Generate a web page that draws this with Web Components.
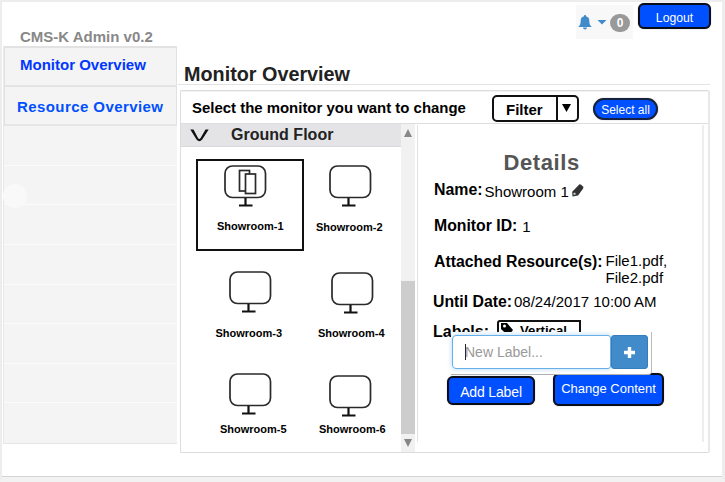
<!DOCTYPE html>
<html lang="en">
<head>
<meta charset="utf-8">
<title>CMS-K Admin</title>
<style>
body{margin:0;font-family:"Liberation Sans",Arial,sans-serif;color:#000;overflow:hidden}
</style>
</head>
<body>
<cms-app></cms-app>
<script>
function define(name, html) {
  const t = document.createElement('template');
  t.innerHTML = '<style>*{box-sizing:border-box}:host{box-sizing:border-box;display:block}</style>' + html;
  customElements.define(name, class extends HTMLElement {
    constructor() {
      super();
      this.attachShadow({mode: 'open'}).appendChild(t.content.cloneNode(true));
    }
  });
}

define('cms-text', `<style>
:host{white-space:nowrap;font-size:var(--s,15px);line-height:20px;height:20px;letter-spacing:var(--ls,0)}
:host([bold]){font-weight:bold}
</style><slot></slot>`);

define('cms-button', `<style>
:host{display:flex;justify-content:center;background:#0050ff;color:#fff;border:2px solid #0a0d18;border-radius:6px;white-space:nowrap;line-height:20px;box-shadow:0 0 1px #777}
</style><slot></slot>`);

define('cms-bell', `<style>
:host{width:57px;height:34px;background:#f8f8f8;display:flex;align-items:flex-start;padding:9px 0 0 2px}
svg{display:block}
span{width:20px;height:18px;border-radius:9px;background:#999;color:#fff;font:bold 12px/18px "Liberation Sans",sans-serif;text-align:center;margin-left:1px}
</style>
<svg width="31" height="18" viewBox="0 0 31 18"><path d="M7 1c.8 0 1 .5 1 1.200 2.300.6 3.300 2.200 3.300 4.300 0 3.500.7 4.700 2.500 6.500H.2C2 11.200 2.700 10 2.700 6.500 2.700 4.400 3.700 2.800 6 2.200 6 1.500 6.200 1 7 1zM5 13.500h4a2 2 0 0 1-4 0z" fill="#428bca"/><path d="M19.500 6h9l-4.500 4.500z" fill="#428bca"/></svg><span>0</span>`);

define('cms-header', `<style>
:host{height:44px;display:flex;align-items:flex-start}
.t{margin:25px auto 0 18px;color:#888}
cms-bell{margin-top:3px}
cms-button{width:73px;height:26px;margin:1px 11px 0 5px;padding-top:3px;font-size:12.2px}
</style>
<cms-text class="t" bold>CMS-K Admin v0.2</cms-text><cms-bell></cms-bell><cms-button>Logout</cms-button>`);

define('cms-sidebar', `<style>
:host{width:174px;height:398px;background:#f4f4f4;border-left:1px solid #e9e9e9;border-bottom:1px solid #e5e5e5;display:grid;grid-template-rows:40px 40px repeat(8,1fr)}
.i{border:1px solid #e2e2e2;color:#0037ff;border-bottom-color:#e6e6e6}
.i.r{color:#0050ff}
.b{border-bottom:1px solid #fbfbfb;position:relative}
.b:last-child{border:0}
.dot{position:absolute;left:-1px;top:18px;width:24px;height:24px;border-radius:50%;background:#f9f9f9}
</style>
<div class="i" style="padding:7px 0 0 15px;border-top-width:2px"><cms-text bold>Monitor Overview</cms-text></div>
<div class="i r" style="padding:10px 0 0 12px;border-bottom-width:2px"><cms-text bold style="--ls:.42px">Resource Overview</cms-text></div>
<div class="b"></div><div class="b"><i class="dot"></i></div><div class="b"></div><div class="b"></div><div class="b"></div><div class="b"></div><div class="b"></div><div class="b"></div>`);

define('cms-filter', `<style>
:host{width:87px;height:27px;border:2px solid #111;border-radius:5px;display:flex;font-weight:bold;font-size:15px;line-height:25px}
.l{width:64px;padding-left:12px;border-right:2px solid #111}
svg{display:block;margin:6px 0 0 4px}
</style><div class="l"><slot></slot></div><svg width="10" height="10"><path d="M0 1h9L4.500 9z"/></svg>`);

define('cms-toolbar', `<style>
:host{height:33px;display:flex;align-items:flex-start;border-top:1px solid #f3f3f3;border-bottom:1px solid #dedee2}
cms-text{--s:14.95px;width:275px;margin:6px 0 0 11px}
cms-filter{margin:3px 14px 0 25px}
cms-button{width:65px;height:22px;border-radius:12px;margin-top:6px;font-size:12px;padding-top:0;border-color:#16213f}
</style><cms-text bold>Select the monitor you want to change</cms-text><cms-filter>Filter</cms-filter><cms-button>Select all</cms-button>`);

define('cms-monitor', `<style>
:host{padding-top:var(--iy);border:2px solid transparent}
:host([selected]){border-color:#111}
svg{display:block;margin-left:var(--ix);overflow:visible}
.p{display:none}:host([selected]) .p{display:block}
cms-text{--s:11px;margin:var(--gap) 0 0 var(--lx)}
:host([selected]) .stand{transform:translateX(2px)}
</style>
<svg width="43" height="43" fill="none" stroke="#2a2a2a"><rect x="1" y="1" width="40.500" height="31.500" rx="7.500" stroke-width="1.700"/><path class="stand" d="M19.500 33v7M13 40.500h13.500" stroke="#111" stroke-width="2.200"/><g class="p" stroke-width="1.700"><rect x="15.500" y="5.500" width="10" height="20.500" fill="#fff"/><rect x="21.500" y="9" width="10" height="19.500" fill="#fff"/></g></svg>
<cms-text bold><slot></slot></cms-text>`);

define('cms-scrollbar', `<style>
:host{width:14px;background:#f1f1f1;display:flex;flex-direction:column;align-items:center}
.th{width:14px;height:153px;background:#cdcdcd;margin-top:143px}
svg{display:block;margin-top:5px}
</style><svg width="10" height="9"><path d="M5 0l4 8H1z" fill="#888"/></svg><div class="th"></div><svg width="10" height="9"><path d="M5 8l4-8H1z" fill="#858585"/></svg>`);

define('cms-floor', `<style>
:host{width:220px;height:328px}
header{height:23px;background:#e4e4e6;border-bottom:1px solid #d8d8da;display:flex;color:#222;padding-left:9px}
svg{display:block;margin:4px 22px 0 0}
.g{display:grid;grid-template-columns:108px 108px;grid-template-rows:92px 110px 92px;margin:12px 0 0 15px}
</style>
<header><svg width="19" height="14"><path d="M.3 1.500H3.500L8 10Q9.300 12 10.600 10L15.500 1.500H18.700L12.200 11.500Q9.300 15 6.500 11.500Z" fill="#111"/></svg><cms-text bold style="--s:16px;--ls:.02px;margin-top:1px">Ground Floor</cms-text></header>
<div class="g">
<cms-monitor selected style="--ix:26px;--iy:4px;--lx:19px;--gap:8px">Showroom-1</cms-monitor>
<cms-monitor style="--ix:23px;--iy:4px;--lx:10px;--gap:9px">Showroom-2</cms-monitor>
<cms-monitor style="--ix:31px;--iy:18px;--lx:17.500px;--gap:9px">Showroom-3</cms-monitor>
<cms-monitor style="--ix:25px;--iy:19px;--lx:12px;--gap:8px">Showroom-4</cms-monitor>
<cms-monitor style="--ix:31px;--iy:10px;--lx:22px;--gap:3px">Showroom-5</cms-monitor>
<cms-monitor style="--ix:23px;--iy:11.500px;--lx:13px;--gap:1.500px">Showroom-6</cms-monitor>
</div>`);

define('cms-popover', `<style>
:host{width:201px;height:43px;background:#fff;border-right:1px solid #bbb;border-bottom:1px solid #b0b0b0;border-radius:0 0 4px 0;display:flex;padding:3px 0 0 1px}
.in{width:159px;height:34px;border:1px solid #66afe9;border-radius:4px 3px 3px 4px;box-shadow:0 0 5px rgba(102,175,233,.5);color:#999;padding:6px 0 0 12px;display:flex}
.in:before{content:"";width:1px;height:16px;background:#222;margin-top:2px}
.b{width:37px;height:34px;background:#428bca;border:1px solid #357ebd;border-radius:3px;padding:10px 0 0 11px}
svg{display:block}
</style><div class="in"><cms-text style="--s:14px;margin-left:-1px">New Label...</cms-text></div><div class="b"><svg width="13" height="13"><path d="M6.500 1v11M1 6.500h11" stroke="#fff" stroke-width="3.400"/></svg></div>`);

define('cms-details', `<style>
:host{width:287px;height:317px;margin:1px 0 0 2px;border-left:1px solid #e2e2e2;border-right:2px solid #eee;position:relative;padding:28px 0 0 16px}
.r{display:flex;align-items:flex-start}
cms-text[bold]{--s:16px}
.tag{width:84px;height:22px;border:2px solid #111;border-radius:3px 0 0 0;margin:-2px 0 0 8px;display:flex}
.tag svg{margin:0 6px 0 1px}
.tag cms-text{margin-top:-1px}
cms-popover{position:absolute;left:33px;top:207px}
</style>
<cms-text bold style="--s:22px;--ls:.6px;color:#555;margin-left:69.500px">Details</cms-text>
<div class="r" style="margin-top:7px"><cms-text bold style="--s:15.900px">Name:</cms-text><cms-text style="margin:2px 0 0 2px">Showroom 1</cms-text><svg width="14" height="15" style="margin:3px 0 0 2px"><path d="M8.500 1.200Q9.500.8 12 3.500 12.800 4.500 12 5.800L7 12.500 1.500 13.500 1.200 8.800Z" fill="#333"/><path d="M2.500 9.800h2v2h-2z" fill="#ccd4da"/></svg></div>
<div class="r" style="margin-top:14px"><cms-text bold style="--s:15.800px">Monitor ID:</cms-text><cms-text style="margin:1px 0 0 5px">1</cms-text></div>
<div class="r" style="margin-top:15px"><cms-text bold style="--s:15.800px">Attached Resource(s):</cms-text><div style="margin:-1px 0 0 3px"><cms-text style="height:17px">File1.pdf,</cms-text><cms-text>File2.pdf</cms-text></div></div>
<div class="r" style="margin:4px 0 0 -1px"><cms-text bold style="--s:15.800px">Until Date:</cms-text><cms-text style="margin-left:2px">08/24/2017 10:00 AM</cms-text></div>
<div class="r" style="margin:10px 0 0 -1px;height:20px"><cms-text bold>Labels:</cms-text><div class="tag"><svg width="14" height="15"><path d="M1 1h6l6 7-4.500 6-7.500-7z"/><circle cx="4.500" cy="4" r="1.500" fill="#fff"/></svg><cms-text bold style="--s:13.200px">Vertical</cms-text></div></div>
<div class="r" style="margin-left:13px;margin-top:31px"><cms-button style="width:88px;height:29px;margin-top:3px;font-size:14px;padding-top:4px;letter-spacing:-.15px">Add Label</cms-button><cms-button style="width:111px;height:33px;margin-left:18px;font-size:13px;padding-top:4px">Change Content</cms-button></div>
<cms-popover></cms-popover>`);

define('cms-panel', `<style>
:host{width:530px;height:363px;border:1px solid #dcdcdc;border-right:2px solid #e8e8e8;border-radius:2px}
.c{display:flex;align-items:flex-start}
cms-scrollbar{height:328px}
</style><cms-toolbar></cms-toolbar><div class="c"><cms-floor></cms-floor><cms-scrollbar></cms-scrollbar><cms-details></cms-details></div>`);

define('cms-app', `<style>
:host{width:725px;height:482px;background:#fff;border:2px solid #ededed;border-right-width:3px;border-bottom:5px solid #f2f2f2}
.w{height:475px;border-bottom:1px solid #d5d5d5}
.m{display:flex;padding-left:1px}
main{margin-left:1px;padding-top:18px}
h1{margin:0;border-bottom:1px solid #e3e3e3;height:21px;width:532px;padding-left:6px;font-size:0;color:#222}
cms-panel{margin:5px 0 0 2px}
</style><div class="w"><cms-header></cms-header><div class="m"><cms-sidebar></cms-sidebar><main><h1><cms-text bold style="--s:19.800px">Monitor Overview</cms-text></h1><cms-panel></cms-panel></main></div></div>`);
</script>
</body>
</html>
